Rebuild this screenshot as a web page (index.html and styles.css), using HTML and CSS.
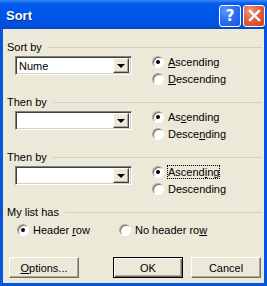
FILE: index.html
```html
<!DOCTYPE html>
<html lang="en">
  <head>
    <meta charset="utf-8">
    <title>Sort</title>
    <link rel="stylesheet" href="styles.css">
  </head>
  <body>
    <div class="window">
      <div class="titlebar">
        <span class="title">Sort</span>
        <div class="caption_btns">
          <span class="cbtn help">?</span>
          <span class="cbtn close">
            <svg width="13" height="13" viewBox="0 0 13 13"><path d="M2 2 L11 11 M11 2 L2 11" stroke="#fff" stroke-width="2.4" stroke-linecap="square"/></svg>
          </span>
        </div>
      </div>

      <div class="client">
        <div class="group">
          <div class="group_head"><span>Sort by</span><span class="rule"></span></div>
          <div class="group_body">
            <div class="combo"><span class="combo_text">Nume</span><span class="combo_btn"><i class="arrow"></i></span></div>
            <div class="radios">
              <label class="radio"><span class="dot on"></span><span><u>A</u>scending</span></label>
              <label class="radio"><span class="dot"></span><span><u>D</u>escending</span></label>
            </div>
          </div>
        </div>

        <div class="group">
          <div class="group_head"><span>Then by</span><span class="rule"></span></div>
          <div class="group_body">
            <div class="combo"><span class="combo_text"></span><span class="combo_btn"><i class="arrow"></i></span></div>
            <div class="radios">
              <label class="radio"><span class="dot on"></span><span>As<u>c</u>ending</span></label>
              <label class="radio"><span class="dot"></span><span>Desce<u>n</u>ding</span></label>
            </div>
          </div>
        </div>

        <div class="group">
          <div class="group_head"><span>Then by</span><span class="rule"></span></div>
          <div class="group_body">
            <div class="combo"><span class="combo_text"></span><span class="combo_btn"><i class="arrow"></i></span></div>
            <div class="radios">
              <label class="radio"><span class="dot on"></span><span class="focus">Ascend<u>i</u>ng</span></label>
              <label class="radio"><span class="dot"></span><span>Descendin<u>g</u></span></label>
            </div>
          </div>
        </div>

        <div class="group last">
          <div class="group_head"><span>My list has</span><span class="rule"></span></div>
          <div class="header_row">
            <label class="radio yes_header"><span class="dot on"></span><span>Header <u>r</u>ow</span></label>
            <label class="radio"><span class="dot"></span><span>No header ro<u>w</u></span></label>
          </div>
        </div>

        <div class="buttons">
          <span class="btn"><u>O</u>ptions...</span>
          <span class="btn default ok">OK</span>
          <span class="btn">Cancel</span>
        </div>
      </div>
    </div>
  </body>
</html>
```

FILE: styles.css
```css
html, body {
  margin:0;
  padding:0;
}
body {
  font-family: "Liberation Sans", Arial, sans-serif;
  font-size:11px;
  color:#000;
  background:#ECE9D8;
}
u {
  text-decoration:underline;
  text-underline-offset:1px;
}

.window {
  width:267px;
  height:286px;
  display:flex;
  flex-direction:column;
}
.titlebar {
  height:29px;
  flex-shrink:0;
  display:flex;
  align-items:center;
  justify-content:space-between;
  padding:0 2px 0 6px;
  box-sizing:border-box;
  background:linear-gradient(to bottom, #3D8DF5 0, #0A5EEC 3px, #0058EE 6px, #0054E6 18px, #0052E0 24px, #0046C8 29px);
}
.title {
  color:#fff;
  font-weight:bold;
  font-size:13px;
  text-shadow:1px 1px 0 #0B2E8C;
  margin-top:1px;
}
.caption_btns {
  display:flex;
  gap:2px;
  margin-top:2px;
}
.cbtn {
  width:20px;
  height:20px;
  border:1px solid #fff;
  border-radius:3px;
  display:flex;
  align-items:center;
  justify-content:center;
  color:#fff;
  font-family:"DejaVu Sans", sans-serif;
  font-weight:bold;
  font-size:15px;
}
.help {
  background:radial-gradient(circle at 30% 25%, #5C9BFF 0, #2B71F0 45%, #1A5AD8 100%);
}
.close {
  background:radial-gradient(circle at 30% 25%, #F19A7E 0, #E2613F 45%, #C9431E 100%);
}

.client {
  flex:1;
  background:#ECE9D8;
  border:3px solid #0055E5;
  border-top:none;
  border-left-color:#0A55DC;
  padding:11px 2px 0 4px;
  display:flex;
  flex-direction:column;
}

.group {
  margin-bottom:8px;
}
.group_head {
  display:flex;
  align-items:center;
  height:13px;
}
.rule {
  flex:1;
  border-top:1px solid #D0D0BF;
  margin-left:6px;
  margin-top:1px;
}
.group_body {
  display:flex;
  align-items:flex-start;
  padding-left:8px;
}

.combo {
  width:117px;
  height:19px;
  box-sizing:border-box;
  margin-top:3px;
  background:#fff;
  border:1px solid;
  border-color:#808080 #fff #fff #808080;
  box-shadow:inset 1px 1px 0 #404040, inset -1px -1px 0 #D4D0C8;
  display:flex;
  align-items:center;
  padding:2px;
}
.combo_text {
  flex:1;
  padding-left:1px;
}
.combo_btn {
  width:16px;
  height:15px;
  box-sizing:border-box;
  background:#ECE9D8;
  border:1px solid;
  border-color:#fff #404040 #404040 #fff;
  box-shadow:inset -1px -1px 0 #ACA899;
  display:flex;
  align-items:center;
  justify-content:center;
}
.arrow {
  width:0;
  height:0;
  border-left:4px solid transparent;
  border-right:4px solid transparent;
  border-top:4px solid #000;
}

.radios {
  margin-left:20px;
  display:flex;
  flex-direction:column;
}
.radio {
  display:flex;
  align-items:center;
  height:17px;
}
.dot {
  width:12px;
  height:12px;
  box-sizing:border-box;
  border-radius:50%;
  border:1px solid;
  border-color:#ACA899 #fff #fff #ACA899;
  background:#fff;
  box-shadow:inset 1px 1px 0 #716F64;
  margin-right:4px;
  position:relative;
}
.dot.on::after {
  content:"";
  position:absolute;
  left:3px;
  top:3px;
  width:4px;
  height:4px;
  border-radius:50%;
  background:#000;
}
.focus {
  outline:1px dotted #000;
  outline-offset:0;
}

.header_row {
  display:flex;
  padding-left:10px;
  margin-top:3px;
}
.yes_header {
  width:102px;
}

.group.last {
  margin-bottom:19px;
}
.buttons {
  display:flex;
  padding-left:2px;
}
.btn {
  width:70px;
  height:21px;
  box-sizing:border-box;
  background:#ECE9D8;
  border:1px solid;
  border-color:#fff #716F64 #716F64 #fff;
  box-shadow:inset -1px -1px 0 #ACA899;
  display:flex;
  align-items:center;
  justify-content:center;
}
.btn.ok {
  margin-left:34px;
  margin-right:8px;
}
.btn.default {
  border:1px solid #000;
  box-shadow:inset 1px 1px 0 #fff, inset -1px -1px 0 #716F64, inset -2px -2px 0 #ACA899;
}
```
